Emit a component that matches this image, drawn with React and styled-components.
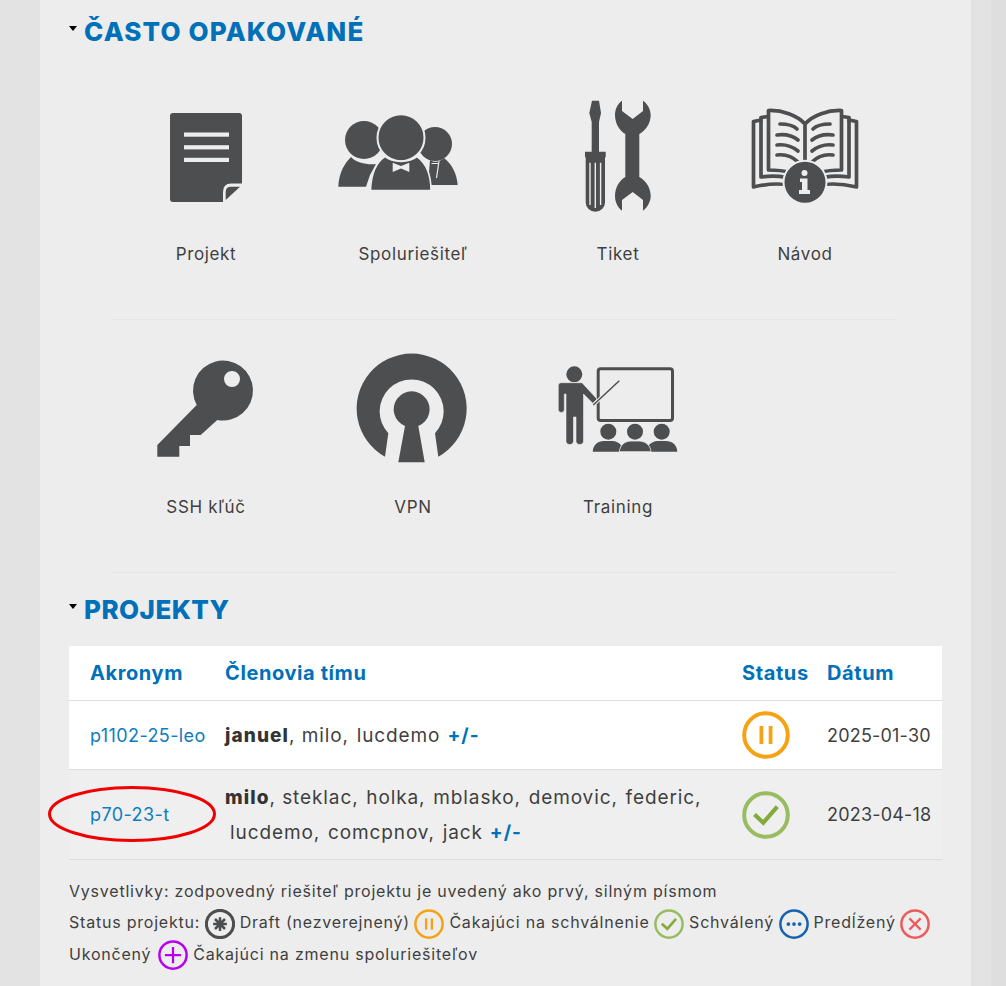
import React from 'react';
import styled, { createGlobalStyle } from 'styled-components';

const GlobalStyle = createGlobalStyle`
  html, body { margin: 0; padding: 0; height: 986px; overflow: hidden; background: #e3e3e3; }
  body { font-family: Inter, "Open Sans", "Liberation Sans", sans-serif; color: #3f3f3f; }
`;

const INK = '#4d4e50';
const BG = '#ededed';

const Page = styled.div`
  display: flex;
  height: 986px;
  padding-left: 40px;
  background: #e3e3e3;
`;
const Panel = styled.main`
  width: 931px;
  height: 986px;
  box-sizing: border-box;
  padding: 11px 29px 0;
  background: ${BG};
  overflow: hidden;
`;
const Gutter = styled.div`
  margin-left: auto;
  width: 15px;
  background: #dedede;
`;
const Title = styled.h2`
  display: flex;
  align-items: center;
  gap: 7px;
  height: 40px;
  margin: 0;
  font-size: 26px;
  font-weight: 800;
  letter-spacing: ${p => p.$track}px;
  color: #0071b9;
  text-transform: uppercase;
`;
const Caret = styled.span`
  width: 0;
  height: 0;
  margin-bottom: 5px;
  border-left: 4px solid transparent;
  border-right: 4px solid transparent;
  border-top: 5px solid #000;
`;
const TileRow = styled.div`
  display: grid;
  grid-template-columns: 188px 226px 184px 190px;
  margin: ${p => p.$top}px 0 0 43px;
`;
const Tile = styled.a`
  display: flex;
  flex-direction: column;
  align-items: center;
  text-align: center;
`;
const TileIcon = styled.svg`
  display: block;
  width: 150px;
  height: 120px;
  fill: ${INK};
`;
const TileLabel = styled.span`
  margin-top: 27px;
  font-size: 17px;
  line-height: 24px;
  letter-spacing: 0.65px;
`;
const Divider = styled.hr`
  height: 1px;
  margin: ${p => p.$top}px 46px ${p => p.$bottom}px 43px;
  border: 0;
  background: #e6e6e6;
`;
const Table = styled.table`
  width: 873px;
  margin-top: 17px;
  table-layout: fixed;
  border-collapse: collapse;
  background: #fff;
  font-size: 18px;
`;
const HeadCell = styled.th`
  height: 54px;
  padding: 0 0 0 ${p => p.$pad || 0}px;
  border-bottom: 1px solid #ddd;
  text-align: left;
  font-size: 20px;
  font-weight: 700;
  letter-spacing: 0.6px;
  color: #0071b9;
`;
const Row = styled.tr`
  background: ${p => (p.$shaded ? '#efefef' : '#fff')};
`;
const Cell = styled.td`
  position: relative;
  height: ${p => p.$h}px;
  padding: 0 0 0 ${p => p.$pad || 0}px;
  border-bottom: 1px solid #ddd;
  line-height: 35px;
  letter-spacing: 0.2px;
`;
const Names = styled.div`
  font-size: 19px;
  letter-spacing: 0.9px;
  white-space: nowrap;
`;
const ProjectLink = styled.a`
  letter-spacing: 0.4px;
  color: #0f7cc0;
`;
const Lead = styled.b`
  font-weight: 800;
  letter-spacing: 1.1px;
  color: #333;
`;
const Member = styled.span`
  margin-left: ${p => p.$left ?? 1.5}px;
`;
const Toggle = styled.b`
  margin-left: 7px;
  font-weight: 700;
  letter-spacing: 1px;
  color: #0071b9;
`;
const Mark = styled.svg`
  position: absolute;
  left: -22px;
  top: 15px;
  width: 170px;
  height: 58px;
  fill: none;
  stroke: #f00000;
  stroke-width: 3;
`;
const Legend = styled.div`
  margin-top: 16px;
  font-size: 16px;
  line-height: 31px;
  letter-spacing: 0.78px;
  white-space: nowrap;
`;
const Ring = styled.svg`
  display: block;
  width: ${p => p.$size}px;
  height: ${p => p.$size}px;
  fill: none;
`;
const LegendBadge = styled.span`
  display: inline-block;
  vertical-align: middle;
  margin: 0 5px 0 ${p => p.$left || 4.5}px;
`;

const PALETTE = {
  draft: '#4d4e50',
  pause: '#f5a315',
  ok: '#98bc61',
  more: '#1563ae',
  stop: '#ee5a5c',
  change: '#b800f0',
};

function StatusIcon({ kind, size }) {
  const c = PALETTE[kind];
  return (
    <Ring $size={size} viewBox="0 0 48 48">
      <circle cx="24" cy="24" r="21.8" stroke={c} strokeWidth={kind === 'draft' ? 5 : 4} />
      {kind === 'pause' && (
        <g fill={c}>
          <rect x="17.5" y="15" width="3.8" height="18" />
          <rect x="26.7" y="15" width="3.8" height="18" />
        </g>
      )}
      {kind === 'ok' && <path d="M12.5 23.5 L21.3 31.7 L35.3 15.7" stroke="#84aa3c" strokeWidth="4.2" />}
      {kind === 'more' && (
        <g fill={c}>
          <circle cx="15" cy="24" r="3" />
          <circle cx="24" cy="24" r="3" />
          <circle cx="33" cy="24" r="3" />
        </g>
      )}
      {kind === 'stop' && <path d="M15 15 L33 33 M33 15 L15 33" stroke={c} strokeWidth="3.4" />}
      {kind === 'change' && <path d="M24 11 V37 M11 24 H37" stroke={c} strokeWidth="3.6" />}
      {kind === 'draft' && (
        <path d="M24 13 V35 M13 24 H35 M16 16 L32 32 M32 16 L16 32" stroke={c} strokeWidth="4" />
      )}
    </Ring>
  );
}

const DocIcon = () => (
  <TileIcon viewBox="131 95 150 120">
    <path d="M173 113 H239 Q242 113 242 116 V183.5 H231 Q223 183.5 223 192 V202 H173 Q170 202 170 199 V116 Q170 113 173 113 Z" />
    <path d="M240 186.7 L225.7 200 V192 Q225.7 186.7 231 186.7 Z" />
    <g fill={BG}>
      <rect x="184" y="132.5" width="45" height="4.2" />
      <rect x="184" y="145.2" width="45" height="4.2" />
      <rect x="184" y="157.8" width="45" height="4.2" />
    </g>
  </TileIcon>
);

const PeopleIcon = () => (
  <TileIcon viewBox="338 95 150 120">
    <path d="M338.3 186.7 C339 172 345 163 351 157 C356 163 368 165 376 164 L370 175 L366 186.7 Z" />
    <path d="M428 185 L430 160 C434 163 440 162 444 158 C452 164 457 174 457.7 185 Z" />
    <path d="M431.5 163.5 H438 M439 161 L436.5 178" stroke={BG} strokeWidth="1.2" fill="none" />
    <circle cx="364" cy="140" r="19" />
    <circle cx="435" cy="144" r="17" />
    <circle cx="401" cy="137.7" r="23.5" stroke={BG} strokeWidth="2" />
    <path d="M370.5 190.5 C371 175 375 163 385 156.5 C392 163 410 163 417 156.5 C426 163 431 175 431 190.5 Z" stroke={BG} strokeWidth="1.6" />
    <path d="M392.7 162.7 L401 166 L409.3 162.7 V172 L401 168.5 L392.7 172 Z" fill={BG} />
  </TileIcon>
);

const ToolsIcon = () => (
  <TileIcon viewBox="543 95 150 120">
    <path d="M592 100.7 H599 L601 113 L599 122 V151.7 H605.7 V157.3 H605 V202.5 A9.6 9.2 0 0 1 585.7 202.5 V157.3 H585 V151.7 H591.7 V122 L589.3 113 Z" />
    <path d="M590 162.7 V205 M595.3 162.7 V208 M600.6 162.7 V205" stroke={BG} strokeWidth="1.4" fill="none" />
    <path d="M622 100.7 C617 104 615 110 615 115 C615 124 620 131 625.3 134 V177 C620 180 615 187 615 196 C615 201 617 207 622 210.7 V200 L632.7 192 L643 200 V210.7 C648 207 650.7 201 650.7 196 C650.7 187 645 180 639.3 177 V134 C645 131 650.7 124 650.7 115 C650.7 110 648 104 643 100.7 V111 L632.7 119 L622 111 Z" />
  </TileIcon>
);

const BookIcon = () => (
  <TileIcon viewBox="730 95 150 120">
    <g fill="none" stroke={INK} strokeWidth="3.7" strokeLinecap="round" strokeLinejoin="round">
      <path d="M805 124 C797 115 782 110 768.5 110.5 V170 C782 170 797 173 805 180 C813 173 828 170 841.5 170 V110.5 C828 110 813 115 805 124 V180" />
      <path d="M768 116.5 L761 117.5 V177 C773 175.5 785 176 796 180 M842 116.5 L849 117.5 V177 C837 175.5 825 176 814 180" />
      <path d="M761 120 L753.5 121.5 V187 C768 183.5 780 183 792 185.5 M849 120 L856.5 121.5 V187 C842 183.5 830 183 818 185.5" />
      <path d="M780 124 C786 124 793 125 797 129 M777 135 C785 134 793 136 798 140 M777 145 C785 144 793 147 798 151 M777 155 C785 154 793 157 798 162" />
      <path d="M830 124 C824 124 817 125 813 129 M833 135 C825 134 817 136 812 140 M833 145 C825 144 817 147 812 151 M833 155 C825 154 817 157 812 162" />
    </g>
    <circle cx="805" cy="182.3" r="21.5" stroke={BG} strokeWidth="2" />
    <circle cx="804.5" cy="173" r="3" fill={BG} />
    <path d="M800 178.5 H807.5 V190 H810 V194 H799 V190 H802 V182 H800 Z" fill={BG} />
  </TileIcon>
);

const KeyIcon = () => (
  <TileIcon viewBox="131 348 150 120">
    <path fillRule="evenodd" d="M196.7 405 A30 30 0 1 1 217.3 420 L200.7 435 H190 V446 H179.3 V456.7 H157.3 V445 Z M232 371 A8 8 0 1 0 232 387 A8 8 0 1 0 232 371 Z" />
  </TileIcon>
);

const VpnIcon = () => (
  <TileIcon viewBox="338 348 150 120">
    <path d="M385 456.7 A55 55 0 1 1 438.3 456.7 L435 433.3 A32 32 0 1 0 388.3 433.3 Z" />
    <path d="M405 426 A18 18 0 1 1 418.3 426 L424.7 462.3 H398.3 Z" />
  </TileIcon>
);

const TrainingIcon = () => (
  <TileIcon viewBox="543 348 150 120">
    <rect x="598.2" y="368.8" width="74.3" height="51.6" rx="2.5" fill="none" stroke={INK} strokeWidth="3" />
    <circle cx="574.3" cy="374.3" r="8" />
    <path d="M561 382.7 H582 L597 399 L593 403.5 L583.5 394 V442 A4 4 0 0 1 576 442 V417 H573.5 V442 A4 4 0 0 1 566 442 V394 H564.3 V409.5 A3 3 0 0 1 558.3 409.5 V385.5 Q558.3 382.7 561 382.7 Z" stroke={BG} strokeWidth="0.6" />
    <path d="M593.3 405 L619.3 380.7" stroke={BG} strokeWidth="3.6" />
    <path d="M593.3 405 L619.3 380.7" stroke={INK} strokeWidth="1.5" />
    <circle cx="608.3" cy="431.7" r="8" />
    <circle cx="635" cy="431.7" r="8" />
    <circle cx="661.7" cy="431.7" r="8" />
    <path d="M592.7 451.7 C593 445 598 441 604 441 H612 C616 441 619 443 621 445 L619.3 451.7 Z" />
    <path d="M650 451.7 L649 445 C651 443 654 441 658 441 H666 C672 441 677 445 677.3 451.7 Z" />
    <path d="M619.3 451.7 C620 445 625 441 631 441 H639 C645 441 650.5 445 651 451.7 Z" stroke={BG} strokeWidth="0.8" />
  </TileIcon>
);

const TILES_TOP = [
  ['Projekt', DocIcon],
  ['Spoluriešiteľ', PeopleIcon],
  ['Tiket', ToolsIcon],
  ['Návod', BookIcon],
];
const TILES_BOTTOM = [
  ['SSH kľúč', KeyIcon],
  ['VPN', VpnIcon],
  ['Training', TrainingIcon],
];

const Tiles = ({ items, top }) => (
  <TileRow $top={top}>
    {items.map(([label, Icon]) => (
      <Tile key={label}>
        <Icon />
        <TileLabel>{label}</TileLabel>
      </Tile>
    ))}
  </TileRow>
);

const Badge = ({ kind, left }) => (
  <LegendBadge $left={left}>
    <StatusIcon kind={kind} size={30} />
  </LegendBadge>
);

export default function App() {
  return (
    <>
      <GlobalStyle />
      <Page>
        <Panel>
          <Title $track={1.15}><Caret />Často opakované</Title>
          <Tiles items={TILES_TOP} top={44} />
          <Divider $top={53} $bottom={0} />
          <Tiles items={TILES_BOTTOM} top={28} />
          <Divider $top={53} $bottom={16} />
          <Title $track={0.45}><Caret />Projekty</Title>
          <Table>
            <colgroup>
              <col width="156" />
              <col width="517" />
              <col width="85" />
              <col width="115" />
            </colgroup>
            <thead>
              <tr>
                <HeadCell $pad={21}>Akronym</HeadCell>
                <HeadCell>Členovia tímu</HeadCell>
                <HeadCell>Status</HeadCell>
                <HeadCell>Dátum</HeadCell>
              </tr>
            </thead>
            <tbody>
              <Row>
                <Cell $h={68} $pad={21}><ProjectLink>p1102-25-leo</ProjectLink></Cell>
                <Cell $h={68}>
                  <Names>
                    <Lead>januel</Lead>, milo, <Member>lucdemo</Member><Toggle>+/-</Toggle>
                  </Names>
                </Cell>
                <Cell $h={68}><StatusIcon kind="pause" size={48} /></Cell>
                <Cell $h={68}>2025-01-30</Cell>
              </Row>
              <Row $shaded>
                <Cell $h={89} $pad={21}>
                  <ProjectLink>p70-23-t</ProjectLink>
                  <Mark viewBox="0 0 170 58">
                    <ellipse cx="85" cy="29" rx="82.5" ry="26.5" />
                  </Mark>
                </Cell>
                <Cell $h={89}>
                  <Names>
                    <Lead>milo</Lead>, steklac, <Member>holka,</Member> <Member>mblasko,</Member> <Member>demovic,</Member> <Member>federic,</Member>
                    <br />
                    <Member $left={5}>lucdemo,</Member> <Member>comcpnov,</Member> <Member>jack</Member><Toggle>+/-</Toggle>
                  </Names>
                </Cell>
                <Cell $h={89}><StatusIcon kind="ok" size={48} /></Cell>
                <Cell $h={89}>2023-04-18</Cell>
              </Row>
            </tbody>
          </Table>
          <Legend>
            Vysvetlivky: zodpovedný riešiteľ projektu je uvedený ako prvý, silným písmom
            <br />
            Status projektu:<Badge kind="draft" />Draft (nezverejnený)<Badge kind="pause" />Čakajúci na schválnenie<Badge kind="ok" />Schválený<Badge kind="more" />Predĺžený<Badge kind="stop" />
            <br />
            Ukončený<Badge kind="change" left={7} />Čakajúci na zmenu spoluriešiteľov
          </Legend>
        </Panel>
        <Gutter />
      </Page>
    </>
  );
}
